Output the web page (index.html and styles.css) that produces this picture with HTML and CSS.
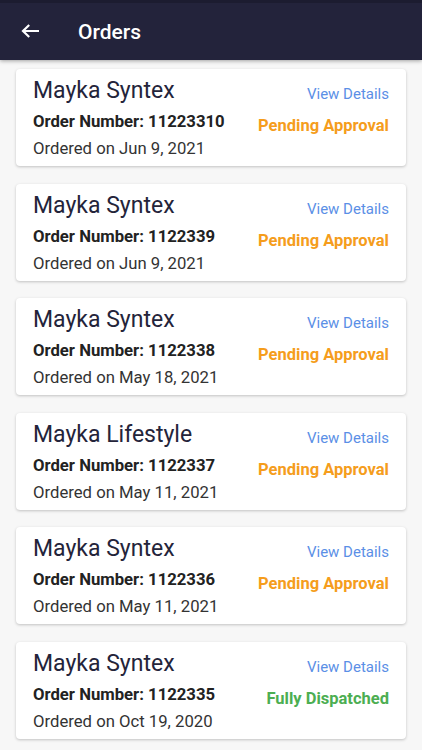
FILE: index.html
```html
<!DOCTYPE html>
<html lang="en">

<head>
    <meta charset="UTF-8">
    <meta name="viewport" content="width=device-width, initial-scale=1.0">
    <link rel="stylesheet" href="styles.css">
</head>

<body>
    <!-- Top bar -->
    <div class="app-bar">
        <svg class="back-icon" width="19" height="14" viewBox="0 0 19 14">
            <path d="M2 7H18M8.2 1L2 7L8.2 13" fill="none" stroke="#fff" stroke-width="2.2"/>
        </svg>
        <div class="app-title">Orders</div>
    </div>

    <!-- Orders list -->
    <div class="order-list">
        <div class="order-card">
            <div class="order-left">
                <div class="order-company">Mayka Syntex</div>
                <div class="order-number">Order Number: 11223310</div>
                <div class="order-date">Ordered on Jun 9, 2021</div>
            </div>
            <div class="order-right">
                <div class="order-link">View Details</div>
                <div class="order-status pending">Pending Approval</div>
            </div>
        </div>

        <div class="order-card">
            <div class="order-left">
                <div class="order-company">Mayka Syntex</div>
                <div class="order-number">Order Number: 1122339</div>
                <div class="order-date">Ordered on Jun 9, 2021</div>
            </div>
            <div class="order-right">
                <div class="order-link">View Details</div>
                <div class="order-status pending">Pending Approval</div>
            </div>
        </div>

        <div class="order-card">
            <div class="order-left">
                <div class="order-company">Mayka Syntex</div>
                <div class="order-number">Order Number: 1122338</div>
                <div class="order-date">Ordered on May 18, 2021</div>
            </div>
            <div class="order-right">
                <div class="order-link">View Details</div>
                <div class="order-status pending">Pending Approval</div>
            </div>
        </div>

        <div class="order-card">
            <div class="order-left">
                <div class="order-company">Mayka Lifestyle</div>
                <div class="order-number">Order Number: 1122337</div>
                <div class="order-date">Ordered on May 11, 2021</div>
            </div>
            <div class="order-right">
                <div class="order-link">View Details</div>
                <div class="order-status pending">Pending Approval</div>
            </div>
        </div>

        <div class="order-card">
            <div class="order-left">
                <div class="order-company">Mayka Syntex</div>
                <div class="order-number">Order Number: 1122336</div>
                <div class="order-date">Ordered on May 11, 2021</div>
            </div>
            <div class="order-right">
                <div class="order-link">View Details</div>
                <div class="order-status pending">Pending Approval</div>
            </div>
        </div>

        <div class="order-card">
            <div class="order-left">
                <div class="order-company">Mayka Syntex</div>
                <div class="order-number">Order Number: 1122335</div>
                <div class="order-date">Ordered on Oct 19, 2020</div>
            </div>
            <div class="order-right">
                <div class="order-link">View Details</div>
                <div class="order-status dispatched">Fully Dispatched</div>
            </div>
        </div>
    </div>
</body>

</html>
```

FILE: styles.css
```css
body {
    margin: 0;
    font-family: Roboto, 'Noto Sans', sans-serif;
    background-color: #f7f7f7;
    color: #333;
}

.app-bar {
    height: 60px;
    background-color: #23233b;
    border-top: 3px solid #1c1c30;
    box-sizing: border-box;
    display: flex;
    align-items: center;
    padding-left: 21px;
    box-shadow: 0 1px 4px rgba(0, 0, 0, 0.35);
    position: relative;
}

.back-icon {
    margin-top: -1px;
}

.app-title {
    margin-left: 38px;
    margin-top: 0;
    font-size: 21px;
    font-weight: 500;
    color: #fff;
}

.order-list {
    padding: 9px 16px;
    display: flex;
    flex-direction: column;
    gap: 17.5px;
}

.order-card {
    height: 97px;
    box-sizing: border-box;
    background-color: #fff;
    border-radius: 4px;
    box-shadow: 0 1px 3px rgba(0, 0, 0, 0.22);
    padding: 5px 17px 4px 17px;
    display: flex;
    justify-content: space-between;
}

.order-company {
    font-size: 23px;
    line-height: 34px;
    color: #24243a;
}

.order-number {
    font-size: 16.7px;
    font-weight: bold;
    line-height: 27px;
    color: #222;
}

.order-date {
    font-size: 16.7px;
    line-height: 28px;
    color: #333;
}

.order-right {
    text-align: right;
}

.order-link {
    font-size: 15px;
    line-height: 40px;
    color: #5b8fe6;
}

.order-status {
    font-size: 16.5px;
    font-weight: bold;
    line-height: 23px;
}

.pending {
    color: #f59d1c;
}

.dispatched {
    color: #4cae52;
}
```
